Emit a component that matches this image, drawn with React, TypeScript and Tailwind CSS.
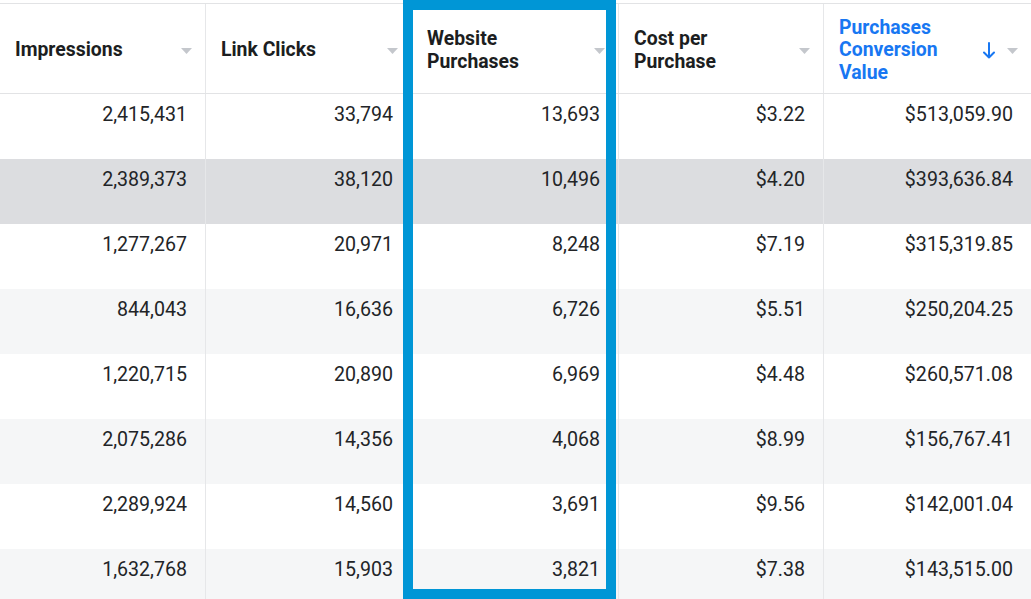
import React from "react";

const rows = [
  ["2,415,431", "33,794", "13,693", "$3.22", "$513,059.90"],
  ["2,389,373", "38,120", "10,496", "$4.20", "$393,636.84"],
  ["1,277,267", "20,971", "8,248", "$7.19", "$315,319.85"],
  ["844,043", "16,636", "6,726", "$5.51", "$250,204.25"],
  ["1,220,715", "20,890", "6,969", "$4.48", "$260,571.08"],
  ["2,075,286", "14,356", "4,068", "$8.99", "$156,767.41"],
  ["2,289,924", "14,560", "3,691", "$9.56", "$142,001.04"],
  ["1,632,768", "15,903", "3,821", "$7.38", "$143,515.00"],
];

const rowBg = [
  "bg-white",
  "bg-[#dcdde0]",
  "bg-white",
  "bg-[#f5f6f7]",
  "bg-white",
  "bg-[#f5f6f7]",
  "bg-white",
  "bg-[#f5f6f7]",
];

const cols = "grid grid-cols-[206px_206px_207px_205px_207px]";

function Caret() {
  return (
    <svg width="11" height="6" viewBox="0 0 11 6" className="shrink-0">
      <path d="M0 0 L11 0 L5.5 6 Z" fill="#c4c7cc" />
    </svg>
  );
}

function Header({ lines, blue }: { lines: string[]; blue?: boolean }) {
  return (
    <div className="flex items-center justify-between pl-[15px] pr-[13px] pt-[4px] border-r border-[#e6e7e9] last:border-r-0">
      <div
        className={`text-[19.4px] leading-[22.5px] font-bold ${blue ? "text-[#1877f2]" : "text-[#1c1e21]"}`}
      >
        {lines.map((l) => (
          <div key={l}>{l}</div>
        ))}
      </div>
      {blue ? (
        <div className="flex items-center gap-[12px]">
          <svg width="12" height="17" viewBox="0 0 12 17">
            <path d="M6 1 V15.5 M1 10.5 L6 15.5 L11 10.5" stroke="#1877f2" strokeWidth="2" fill="none" strokeLinecap="round" strokeLinejoin="round" />
          </svg>
          <Caret />
        </div>
      ) : (
        <Caret />
      )}
    </div>
  );
}

export default function App() {
  return (
    <div
      className="relative w-[1031px] h-[599px] overflow-hidden bg-white"
      style={{ fontFamily: "Roboto, 'Liberation Sans', sans-serif" }}
    >
      <div className="h-[3px] bg-white" />
      <div className={`${cols} h-[91px] border-t border-b border-[#e2e3e5]`}>
        <Header lines={["Impressions"]} />
        <Header lines={["Link Clicks"]} />
        <Header lines={["Website", "Purchases"]} />
        <Header lines={["Cost per", "Purchase"]} />
        <Header lines={["Purchases", "Conversion", "Value"]} blue />
      </div>
      {rows.map((r, i) => (
        <div key={i} className={`${cols} h-[65px] ${rowBg[i]}`}>
          {r.map((v, j) => (
            <div
              key={j}
              className="pt-[10px] pr-[18px] text-right text-[19.6px] leading-[22px] text-[#222427] border-r border-[#e6e7e9] last:border-r-0"
            >
              {v}
            </div>
          ))}
        </div>
      ))}
      <div className="absolute left-[403px] top-0 w-[213px] h-[599px] border-[10px] border-[#0096d6] pointer-events-none" />
    </div>
  );
}
